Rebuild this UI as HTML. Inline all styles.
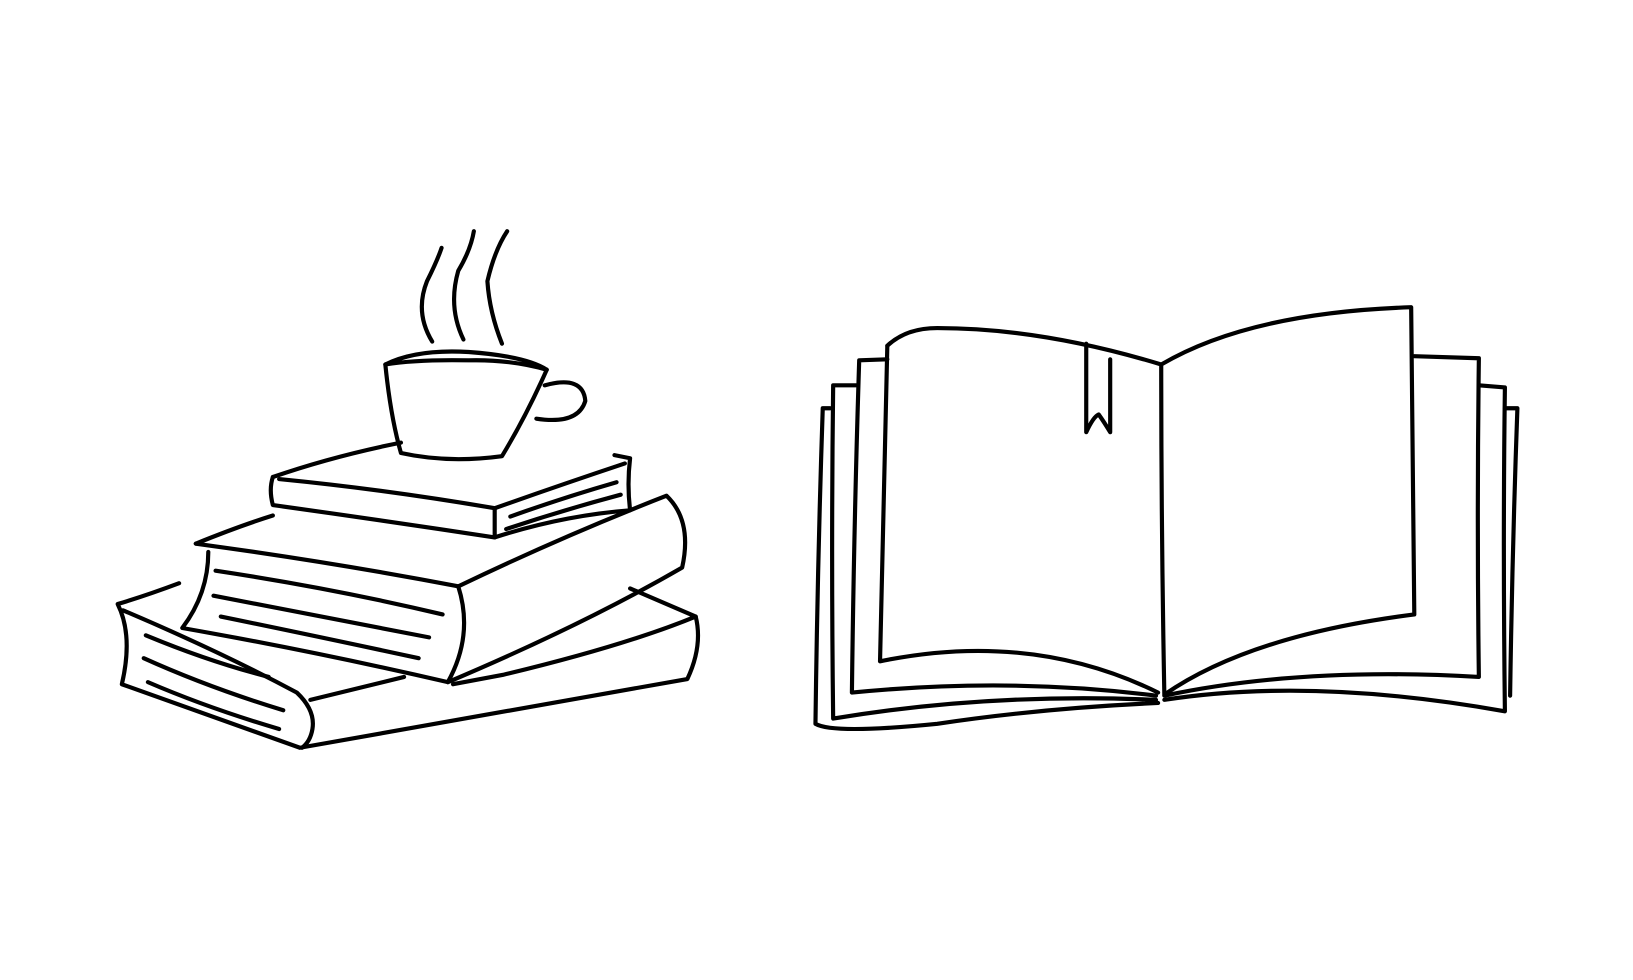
<!DOCTYPE html>
<html><head><style>html,body{margin:0;background:#fff}svg{display:block}</style></head><body>
<svg width="1633" height="980" viewBox="0 0 1568 941" preserveAspectRatio="none" fill="none" stroke="#000" stroke-width="4" stroke-linecap="round" stroke-linejoin="round">
<!-- bottom book -->
<path d="M172,560 Q140,572 113,580 Q128,610 117,657 L288,718 L660,652 Q675,620 668,592 L605,565"/>
<path d="M118,586 Q210,625 285,665 Q303,682 300,700 Q298,712 290,718"/>
<path d="M298,672 L388,650"/>
<path d="M668,592 Q600,620 483,648 L435,657"/>
<path d="M140,610 Q200,635 258,650"/><path d="M138,632 Q200,660 272,682"/><path d="M142,655 Q200,680 268,700"/>
<!-- middle book -->
<path d="M188,522 Q230,505 262,495"/>
<path d="M188,522 Q320,540 440,563 Q540,515 640,476 Q665,500 655,545 Q560,600 430,655 Q300,625 175,603 Q200,570 200,530"/>
<path d="M440,563 Q455,610 430,655"/>
<path d="M207,548 Q320,565 425,590"/><path d="M205,572 Q310,592 412,612"/><path d="M212,592 Q300,610 402,632"/>
<!-- top book -->
<path d="M262,458 Q320,438 385,425"/>
<path d="M262,458 Q258,470 262,485 Q370,500 475,516 Q540,495 605,490 Q602,465 605,440 L590,437"/>
<path d="M268,460 Q370,470 475,488 Q540,465 600,445"/>
<path d="M475,488 L475,516"/>
<path d="M490,496 Q540,478 592,463"/><path d="M486,508 Q540,490 596,475"/>
<!-- cup -->
<path d="M370,350 Q400,335 450,338 Q505,342 525,355 Q490,345 450,346 Q400,345 370,350 Z"/>
<path d="M370,350 Q375,400 385,435 Q430,445 482,438 Q505,400 525,355"/>
<path d="M523,370 Q560,360 562,385 Q555,408 515,402"/>
<!-- steam -->
<path d="M415,328 Q398,300 410,270 Q420,250 424,238"/>
<path d="M445,326 Q430,295 440,260 Q452,240 455,222"/>
<path d="M482,330 Q470,300 468,270 Q475,240 487,222"/>
<!-- open book -->
<path d="M852,332 Q870,315 900,315 Q1000,315 1115,350 Q1200,300 1355,295 L1358,590 Q1200,610 1118,667 Q1115,510 1115,350"/>
<path d="M852,332 Q848,480 845,635 Q990,605 1112,665"/>
<path d="M852,345 L825,346 Q820,500 818,665 Q970,650 1110,668"/>
<path d="M822,370 L800,370 Q798,530 800,690 Q950,665 1110,672"/>
<path d="M797,392 L790,392 Q785,540 783,695 Q800,705 900,695 Q1000,680 1112,675"/>
<path d="M1358,342 L1420,344 Q1418,500 1420,650 Q1250,640 1118,668"/>
<path d="M1420,370 L1445,372 Q1443,520 1445,683 Q1260,650 1118,672"/>
<path d="M1445,392 L1457,392 Q1452,530 1450,668"/>
<path d="M1043,330 L1043,415 Q1050,400 1055,398 Q1060,405 1066,415 L1066,345"/>
</svg>
</body></html>
